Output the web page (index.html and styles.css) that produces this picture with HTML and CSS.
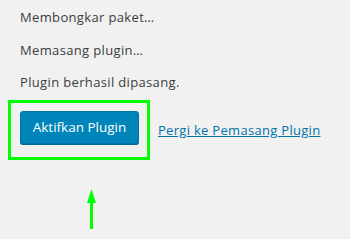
FILE: index.html
```html
<!DOCTYPE html>
<html>
<head>
<meta charset="utf-8">
<link rel="stylesheet" href="styles.css">
</head>
<body>
<div class="wrap">
  <p class="msg">Membongkar paket…</p>
  <p class="msg">Memasang plugin…</p>
  <p class="msg">Plugin berhasil dipasang.</p>
  <div class="actions">
    <div class="highlight">
      <a class="button-primary">Aktifkan Plugin</a>
    </div>
    <a class="link">Pergi ke Pemasang Plugin</a>
  </div>
  <svg class="arrow" width="9" height="40" viewBox="0 0 9 40">
    <polygon points="4.5,0 9,14 0,14" fill="#00ff00"/>
    <rect x="3" y="12" width="3" height="28" fill="#00ff00"/>
  </svg>
</div>
</body>
</html>
```

FILE: styles.css
```css
html, body {
  margin: 0;
  padding: 0;
  background: #f1f1f1;
}
.wrap {
  font-family: "Open Sans", "Noto Sans", sans-serif;
  font-size: 13px;
  color: #3c3c3c;
  padding: 8px 0 0 8px;
  display: flex;
  flex-direction: column;
  align-items: flex-start;
}
.msg {
  margin: 0 0 13px 12px;
  line-height: 19.5px;
  letter-spacing: 0.35px;
}
.actions {
  display: flex;
  align-items: center;
  margin-top: -6px;
}
.highlight {
  border: 3px solid #00ff00;
  padding: 8px 8px 13px 9px;
  width: 119px;
}
.button-primary {
  display: flex;
  align-items: center;
  justify-content: center;
  box-sizing: border-box;
  width: 119px;
  height: 33px;
  background: #0085ba;
  border: 1px solid #0073aa;
  border-radius: 3px;
  box-shadow: 0 1px 0 #006799;
  color: #fff;
  font-size: 13.5px;
}
.link {
  margin-left: 8px;
  color: #0073aa;
  text-decoration: underline;
  font-size: 13px;
  letter-spacing: 0.3px;
}
.arrow {
  display: block;
  margin: 29px 0 0 79px;
}
```
